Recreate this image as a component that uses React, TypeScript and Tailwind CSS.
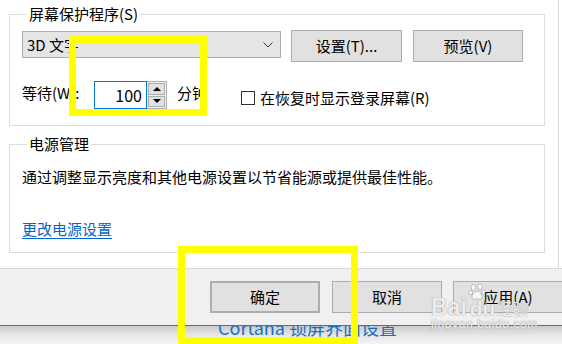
import React from "react";

const font = "font-['Noto_Sans_CJK_SC','Noto_Sans',sans-serif]";

function Btn({ children, className = "" }: { children: React.ReactNode; className?: string }) {
  return (
    <div
      className={`flex items-center justify-center bg-[#e1e1e1] border border-[#adadad] text-[15px] leading-[20px] text-black ${className}`}
    >
      {children}
    </div>
  );
}

const wm = "text-white/80 [text-shadow:0_0_1px_#a0a0a0,0_0_1px_#a0a0a0]";

export default function App() {
  return (
    <div className={`relative w-[562px] h-[344px] overflow-hidden bg-white ${font} text-black`}>
      {/* upper dialog content */}
      <div className="w-[559px] h-[268px] border-r border-[#d9d9d9] pl-[9px] pt-[4px]">
        {/* group 1 */}
        <fieldset className="w-[536px] border border-[#dcdcdc] pl-[12px] pt-[7px] pb-[16px]">
          <legend className="ml-[5px] px-[2px] text-[15px] leading-[20px]">屏幕保护程序(S)</legend>
          <div className="flex items-start">
            <div className="w-[259px] h-[27px] bg-[#e5e5e5] border border-[#adadad] flex items-center pl-[4px] pr-[7px] justify-between text-[15px] leading-[20px]">
              <span>3D 文字</span>
              <svg width="10" height="6" viewBox="0 0 10 6">
                <polyline points="0.5,0.5 5,5 9.5,0.5" fill="none" stroke="#333" strokeWidth="1" />
              </svg>
            </div>
            <Btn className="ml-[10px] -mt-px w-[111px] h-[32px]">设置(T)...</Btn>
            <Btn className="ml-[11px] -mt-px w-[110px] h-[32px]">预览(V)</Btn>
          </div>
          <div className="flex items-center mt-[19px] h-[28px] text-[15px] leading-[20px]">
            <span className="w-[72px] -mt-[4px]">等待(W):</span>
            <div className="flex h-[28px] w-[73px]">
              <div className="w-[53px] h-[28px] border border-[#0078d7] flex items-center justify-end pr-[4px] text-[16px]">
                100
              </div>
              <div className="w-[20px] h-[28px] border border-[#adadad] border-l-0 bg-[#f0f0f0] flex flex-col p-px gap-px">
                <div className="flex-1 bg-[#e1e1e1] border border-[#adadad] flex items-center justify-center">
                  <div className="w-0 h-0 border-l-[4px] border-r-[4px] border-b-[4px] border-l-transparent border-r-transparent border-b-black" />
                </div>
                <div className="flex-1 bg-[#e1e1e1] border border-[#adadad] flex items-center justify-center">
                  <div className="w-0 h-0 border-l-[4px] border-r-[4px] border-t-[4px] border-l-transparent border-r-transparent border-t-black" />
                </div>
              </div>
            </div>
            <span className="ml-[10px] -mt-[4px]">分钟</span>
            <div className="ml-[34px] mt-[6px] flex items-center">
              <div className="w-[14px] h-[14px] border border-[#333]" />
              <span className="ml-[5px]">在恢复时显示登录屏幕(R)</span>
            </div>
          </div>
        </fieldset>

        {/* group 2 */}
        <fieldset className="mt-[8px] w-[536px] border border-[#dcdcdc] pl-[12px] pt-[13px] pb-[13px]">
          <legend className="ml-[5px] px-[2px] text-[15px] leading-[20px]">电源管理</legend>
          <div className="text-[15px] leading-[20px]">通过调整显示亮度和其他电源设置以节省能源或提供最佳性能。</div>
          <div className="mt-[32px] text-[15px] leading-[20px]">
            <span className="text-[#0066cc] underline underline-offset-[3px]">更改电源设置</span>
          </div>
        </fieldset>
      </div>

      {/* footer */}
      <div className="h-[58px] border-t border-b border-t-[#dadada] border-b-[#1a7fd4] bg-[#f0f0f0] flex items-start pt-[12px] pl-[210px]">
        <Btn className="shrink-0 w-[110px] h-[32px] border-2 border-[#0078d7]">确定</Btn>
        <Btn className="shrink-0 ml-[12px] w-[110px] h-[32px]">取消</Btn>
        <Btn className="shrink-0 ml-[11px] w-[110px] h-[32px]">应用(A)</Btn>
      </div>

      {/* behind-dialog strip */}
      <div className="relative h-[18px] overflow-hidden bg-gradient-to-b from-[#cbcbcb] via-[#e6e6e6] to-[#f4f4f4]">
        <div className="absolute left-[218px] top-[-10px] text-[18px] leading-[22px] text-[#1a6fc4] whitespace-nowrap">
          Cortana 锁屏界面设置
        </div>
      </div>

      {/* watermark */}
      <div className="absolute left-[431px] top-[283px] pointer-events-none">
        <div className="flex items-end">
          <span className={`${wm} font-bold text-[23px] leading-[20px] font-['Liberation_Sans',sans-serif]`}>Bai</span>
          <div className="flex flex-col items-start ml-[3px]">
            <svg width="18" height="18" viewBox="0 0 22 24" className="ml-[-2px]">
              <g fill="rgba(255,255,255,0.8)" stroke="#a8a8a8" strokeWidth="1">
                <ellipse cx="6" cy="6" rx="3" ry="4" />
                <ellipse cx="15" cy="5" rx="3" ry="4" />
                <ellipse cx="2.5" cy="13" rx="2.3" ry="3" />
                <ellipse cx="19.5" cy="12" rx="2.3" ry="3" />
                <path d="M11 11 C6 11 3 18 5 21 C7 23 9 21 11 21 C13 21 15 23 17 21 C19 18 16 11 11 11 Z" />
              </g>
            </svg>
            <span className={`${wm} font-bold text-[21px] leading-[16px] font-['Liberation_Sans',sans-serif]`}>du</span>
          </div>
          <span className={`${wm} ml-[1px] text-[16px] leading-[17px]`}>经验</span>
        </div>
        <div className={`${wm} mt-[2px] text-[12px] leading-[11px] font-['Liberation_Sans',sans-serif] tracking-[0.6px]`}>
          jingyan.baidu.com
        </div>
      </div>

      {/* yellow highlights */}
      <div className="absolute left-[69px] top-[36px] w-[138px] h-[80px] border-[7px] border-[#ffff00]" />
      <div className="absolute left-[178px] top-[246px] w-[180px] h-[98px] border-[7px] border-[#ffff00]" />
    </div>
  );
}
